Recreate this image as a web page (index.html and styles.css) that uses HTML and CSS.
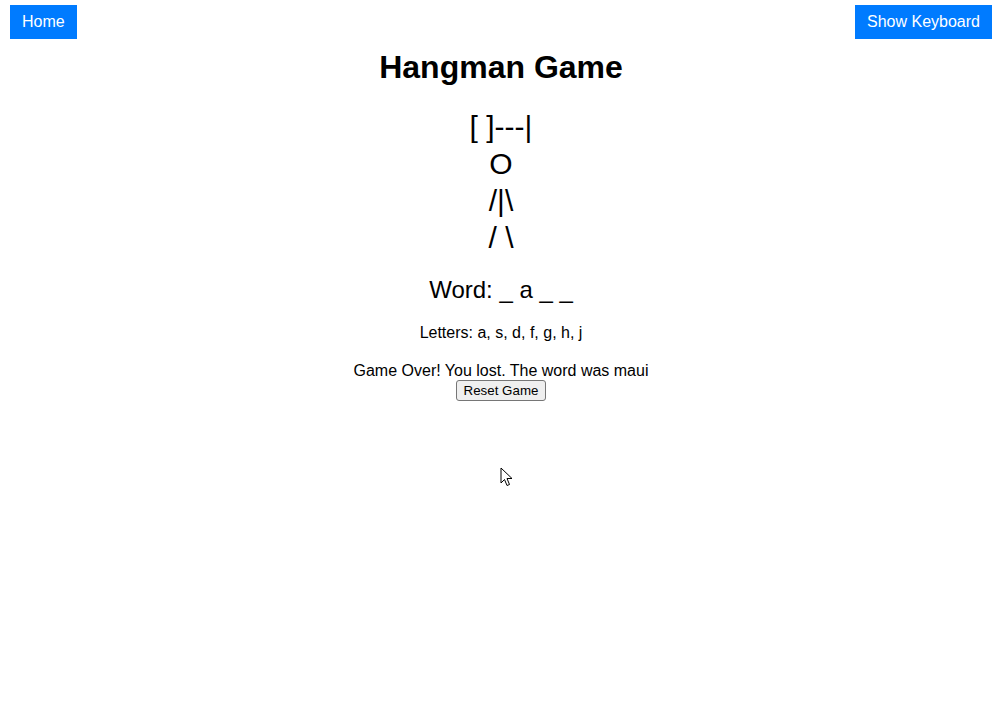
FILE: index.html
```html
<!DOCTYPE html>
<html lang="en">
<head>
<meta charset="utf-8">
<title>Hangman Game</title>
<link rel="stylesheet" href="styles.css">
</head>
<body>
<header class="topbar">
  <button class="nav-btn">Home</button>
  <button class="nav-btn">Show Keyboard</button>
</header>
<main class="game">
  <h1 class="title">Hangman Game</h1>
  <div class="art">
    <div>[ ]---|</div>
    <div>O</div>
    <div>/|\</div>
    <div>/ \</div>
  </div>
  <p class="word">Word: _ a _ _</p>
  <p class="letters">Letters: a, s, d, f, g, h, j</p>
  <div class="status">Game Over! You lost. The word was maui</div>
  <button class="reset">Reset Game</button>
</main>
<svg class="cursor" width="14" height="22" viewBox="0 0 14 22" aria-hidden="true">
  <path d="M1 1 L1 16 L4.5 12.5 L7 18.5 L9.5 17.5 L7 11.5 L12 11.5 Z" fill="#fff" stroke="#000" stroke-width="1" stroke-linejoin="round"/>
</svg>
</body>
</html>
```

FILE: styles.css
```css
html, body {
  margin: 0;
  padding: 0;
  background: #fff;
}

body {
  font-family: "Liberation Sans", Arial, sans-serif;
  color: #000;
}

.topbar {
  display: flex;
  justify-content: space-between;
  align-items: flex-start;
  padding: 5px 10px 0;
}

.nav-btn {
  background: #007bff;
  color: #fff;
  border: none;
  font-family: "Liberation Sans", Arial, sans-serif;
  font-size: 16px;
  line-height: 18px;
  padding: 8px 12px;
  margin: 0;
  cursor: pointer;
}

.game {
  text-align: center;
}

.title {
  font-size: 32px;
  font-weight: bold;
  line-height: 37px;
  margin: 10px 0 0;
}

.art {
  margin-top: 21.5px;
  font-size: 30px;
  line-height: 37px;
}

.word {
  font-size: 24px;
  margin: 20.5px 0 0;
}

.letters {
  font-size: 16px;
  margin: 19.5px 0 0;
}

.status {
  font-size: 16px;
  margin-top: 20.5px;
}

.reset {
  font-family: "Liberation Sans", Arial, sans-serif;
  font-size: 13.333px;
  line-height: 17px;
  color: #000;
  background: #efefef;
  border: 1px solid #767676;
  border-radius: 3px;
  padding: 1px 7px;
  margin: 0;
}

.cursor {
  position: absolute;
  left: 500px;
  top: 467px;
}
```
